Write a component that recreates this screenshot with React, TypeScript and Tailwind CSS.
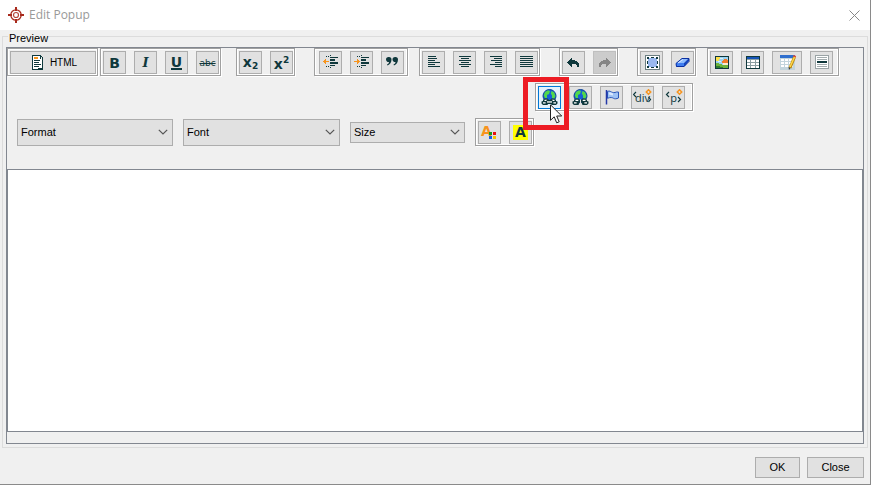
import { useState } from 'react';
import type { ReactNode } from 'react';
import clsx from 'clsx';

const INK = '#0f383c';

type ToolProps = {
  label: string;
  children: ReactNode;
  wide?: boolean;
  disabled?: boolean;
  active?: boolean;
};

function Tool({ label, children, wide, disabled, active }: ToolProps) {
  return (
    <button
      type="button"
      title={label}
      aria-label={label}
      disabled={disabled}
      className={clsx(
        'flex h-[23px] shrink-0 items-center justify-center border text-[#0f383c]',
        wide ? 'w-[30px]' : 'w-[23px]',
        active ? 'border-[#0078d7] bg-[#e5f1fb]' : disabled ? 'border-[#bfbfbf] bg-[#cccccc]' : 'border-[#adadad] bg-[#e1e1e1]'
      )}
    >
      {children}
    </button>
  );
}

function Group({ className, children }: { className?: string; children: ReactNode }) {
  return (
    <div
      className={clsx(
        'flex shrink-0 gap-2 border border-[#a0a0a0] pt-0.5 pb-px shadow-[inset_0_0_0_1px_#fff,1px_1px_0_#fff]',
        className ?? 'pl-0.5 pr-px'
      )}
    >
      {children}
    </div>
  );
}

function Icon({ children, smooth }: { children: ReactNode; smooth?: boolean }) {
  return (
    <svg width="17" height="17" viewBox="0 0 17 17" fill="none" shapeRendering={smooth ? 'auto' : 'crispEdges'} className="block shrink-0" aria-hidden="true">
      {children}
    </svg>
  );
}

const ALIGN = {
  left: 'M3 2h8v1H3zM3 4h9v1H3zM3 6h7v1H3zM3 8h12v1H3zM3 10h7v1H3zM3 12h12v1H3z',
  center: 'M3 2h12v1H3zM5 4h8v1H5zM3 6h12v1H3zM5 8h8v1H5zM3 10h12v1H3zM5 12h8v1H5z',
  right: 'M3 2h12v1H3zM7 4h8v1H7zM4 6h11v1H4zM8 8h7v1H8zM3 10h12v1H3zM8 12h7v1H8z',
  full: 'M2 2h13v1H2zM2 4h13v1H2zM2 6h13v1H2zM2 8h13v1H2zM2 10h13v1H2zM2 12h13v1H2z',
};

function AlignIcon({ kind }: { kind: keyof typeof ALIGN }) {
  return (
    <Icon>
      <path fill={INK} d={ALIGN[kind]} />
    </Icon>
  );
}

function IndentIcon({ out }: { out?: boolean }) {
  return (
    <Icon>
      <path fill={INK} d="M4 2h1v1H4zM6 2h1v1H6zM8 1h1v1H8zM8 3h8v1H8zM8 5h5v2H8zM8 8h8v2H8zM8 11h5v1H8zM4 12h1v1H4zM6 12h1v1H6zM8 13h1v1H8z" />
      {out ? (
        <path fill="#f7941d" d="M1 7h6v1H1zM2 6h2v3H2zM3 5h1v5H3z" />
      ) : (
        <path fill="#f7941d" d="M1 7h6v1H1zM4 6h2v3H4zM4 5h1v5H4z" />
      )}
    </Icon>
  );
}

function UndoIcon() {
  return (
    <Icon>
      <path fill={INK} d="M6 4h1v2h3v1h2v1h1v1h1v4h-2v-2h-1v-1H7v3H6v-1H5v-1H4v-1H3V9H2V8h1V7h1V6h1V5h1z" />
    </Icon>
  );
}

function RedoIcon() {
  return (
    <Icon>
      <path fill="#858585" d="M11 4h-1v2H7v1H5v1H4v1H3v4h2v-2h1v-1h4v3h1v-1h1v-1h1v-1h1V9h1V8h-1V7h-1V6h-1V5h-1z" />
    </Icon>
  );
}

function SelectAllIcon() {
  return (
    <Icon>
      <path fill="#fff" stroke="#6b7d80" d="M2.500 1.500h14v14h-14z" />
      <path fill="#9ab8ef" d="M5 4h9v9H5z" />
      <path fill={INK} d="M4 3h2v2H4zM8 3h3v1H8zM13 3h2v2h-2zM4 7h1v3H4zM14 7h1v3h-1zM4 12h2v2H4zM8 13h3v1H8zM13 12h2v2h-2z" />
    </Icon>
  );
}

function EraserIcon() {
  return (
    <Icon smooth>
      <path fill="#8dbcff" d="M2 9L8 4h7l-5 5z" />
      <path fill="#3f7df0" d="M2 9h8v4H2z" />
      <path fill="#1245c0" d="M10 9l5-5v3l-5 6z" />
      <path stroke="#0b2fa0" d="M2 9.500L8 4.500h7v3L10 12.500H2.500z" />
      <path stroke="#d7e6ff" d="M4 9L9 5.500" />
    </Icon>
  );
}

function ImageIcon() {
  return (
    <Icon>
      <path fill="#9bd3f2" stroke={INK} d="M2.500 2.500h13v12h-13z" />
      <path fill="#ffe14a" d="M3 3h4v2H6v2H3z" />
      <path fill="#d9f0fa" d="M7 4h3v1H7zM5 7h3v1H5z" />
      <path fill="#f07a28" d="M11 5h3v1h1v3H9V7h1V6h1z" />
      <path fill="#f7ead0" d="M10 9h5v2h-5z" />
      <path fill="#6db33a" d="M3 9h3v1h3v1h6v3H3z" />
      <path fill="#2d7d2e" d="M3 12h4v1h3v1H3z" />
    </Icon>
  );
}

function TableIcon() {
  return (
    <Icon>
      <path fill="#8b9ea2" d="M2 2h14v13H2z" />
      <path fill="#1554b8" d="M2 2h14v3H2z" />
      <path fill="#fff" d="M3 6h3v2H3zM7 6h4v2H7zM12 6h3v2h-3zM3 9h3v2H3zM7 9h4v2H7zM12 9h3v2h-3zM3 12h3v2H3zM7 12h4v2H7zM12 12h3v2h-3z" />
      <path stroke={INK} d="M2.500 2.500h13v12h-13z" />
    </Icon>
  );
}

function EditTableIcon() {
  return (
    <Icon smooth>
      <path fill="#c2d4dc" d="M1 1h15v15H1z" />
      <path fill="#2f6fce" d="M1 1h15v3H1z" />
      <path fill="#fff" d="M2 5h3v2H2zM6 5h3v2H6zM10 5h4v2h-4zM2 8h3v2H2zM6 8h3v2H6zM10 8h4v2h-4zM2 11h3v2H2zM6 11h3v2H6zM10 11h4v2h-4z" />
      <path stroke="#b98712" strokeWidth="3" d="M15.500 3L11 14" />
      <path stroke="#ffd84a" strokeWidth="1.500" d="M15.500 3L11 13" />
      <path stroke="#e24b36" strokeWidth="3" d="M16 1.500l-.6 1.500" />
      <path fill="#333" d="M9.500 13l2 1-1.500 2z" />
    </Icon>
  );
}

function RuleIcon() {
  return (
    <Icon>
      <path fill="#fff" stroke="#9aa3a5" d="M2.500 1.500h13v13h-13z" />
      <path fill="#a4adaf" d="M4 3h10v1H4zM4 5h10v1H4zM4 10h10v1H4zM4 12h10v1H4z" />
      <path fill={INK} d="M4 7h10v2H4z" />
    </Icon>
  );
}

function GlobeIcon({ broken }: { broken?: boolean }) {
  return (
    <Icon smooth>
      <circle cx="8.500" cy="7" r="6.500" fill="#1660d8" stroke="#0c4296" />
      <path fill="#52d84a" d="M4 3l3-1.800L9 2l-1 3-2 1v3H4L2.800 6.500zM10.500 2l2.500 1.200L14.500 7 13 10l-2-1V6.500L9.800 4.500z" />
      <path
        fill={INK}
        d="M3.500 9.500h3L8 11v1.500L6.500 16H2L.5 14.500v-2L2 12v-1zM13.500 9.500h-3L9 11v1.500l1.500 3.500H15l1.500-1.500v-2L15 12v-1z"
      />
      <path fill="#fff" d="M3.500 10.800h2.800v1.200H3.500zM10.700 10.800h2.800v1.200h-2.800zM2 13.300h2.600v1.300H2zM12.400 13.300H15v1.300h-2.600z" />
      {broken ? (
        <path fill="#e1e1e1" d="M8 10.500h1V17H8z" />
      ) : (
        <>
          <path fill={INK} d="M5.500 11h6v4h-6z" />
          <path fill="#fff" d="M6 12.300h5v1.300H6z" />
        </>
      )}
    </Icon>
  );
}

function FlagIcon() {
  return (
    <Icon smooth>
      <path fill="#9fc3f5" stroke="#2a56b8" d="M4.500 2.500c2-1 3 0 4 .5s3 1 5 0h2v6c-2 1-4 1-5 .3s-3-1.300-6 0z" />
      <path fill="#dbe9ff" d="M6 3.500h2l2 1v2L6 5.500z" />
      <path stroke="#2438a8" strokeWidth="1.500" d="M3.500 1v14.500" />
    </Icon>
  );
}

function TagIcon({ name }: { name: string }) {
  return (
    <span className="relative flex h-[17px] w-[17px] items-center justify-center font-['Open_Sans',sans-serif] text-[11px] leading-3">
      <span>{name}</span>
      <svg width="19" height="17" viewBox="0 0 19 17" fill="none" className="absolute -left-px top-0" aria-hidden="true">
        <path stroke={INK} strokeWidth="1.200" d={name === 'p' ? 'M5 3L2.500 5.500 5 8M14 8l2.500 2.500L14 13' : 'M3 3L.5 5.500 3 8M15.500 8l2 2.500-2 2.500'} />
        <path stroke="#f7941d" strokeWidth="1.500" d="M15.500.800l2.200 2.200-2.200 2.200L13.300 3z" />
      </svg>
    </span>
  );
}

function QuoteIcon() {
  return (
    <Icon smooth>
      <path fill={INK} d="M5 3a2.500 2.500 0 0 1 2.500 2.500C7.500 8.500 6 10.500 3.500 11.500L3 10.500c1.300-.8 2-1.600 2-2.600A2.500 2.500 0 1 1 5 3zM11.500 3A2.500 2.500 0 0 1 14 5.500c0 3-1.500 5-4 6l-.5-1c1.300-.8 2-1.600 2-2.600a2.500 2.500 0 1 1 0-4.900z" />
    </Icon>
  );
}

function Dropdown({ name, className }: { name: string; className: string }) {
  return (
    <div className={clsx('relative', className)}>
      <select aria-label={name} className="h-full w-full appearance-none border border-[#adadad] bg-[#e1e1e1] pl-[3px] pr-5">
        <option>{name}</option>
      </select>
      <svg width="10" height="6" viewBox="0 0 10 6" fill="none" className="pointer-events-none absolute inset-y-0 right-[5px] my-auto" aria-hidden="true">
        <path stroke="#555" strokeWidth="1.200" d="M.8.800L5 5 9.200.800" />
      </svg>
    </div>
  );
}

function DialogButton({ children, className }: { children: ReactNode; className: string }) {
  return (
    <button type="button" className={clsx('h-[21px] border border-[#adadad] bg-[#e1e1e1]', className)}>
      {children}
    </button>
  );
}

export default function App() {
  const [content, setContent] = useState('');

  return (
    <div className="flex min-h-screen flex-col border-r border-b border-[#8a8a8a] bg-[#f0f0f0] font-['Liberation_Sans',Arial,sans-serif] text-[11px] text-black">
      <header className="flex h-[30px] items-center gap-[5px] bg-white pl-2 pr-2.5">
        <svg width="16" height="16" viewBox="0 0 16 16" fill="none" aria-hidden="true">
          <circle cx="8" cy="8" r="5.200" stroke="#a82a1c" strokeWidth="1.300" />
          <circle cx="8" cy="8" r="2.500" stroke="#b5483c" strokeWidth="1.200" />
          <path stroke="#a82a1c" strokeWidth="2" d="M8 0v4M8 12v4M0 8h4M12 8h4" />
        </svg>
        <h1 className="font-['Open_Sans',sans-serif] text-[12px] text-[#999]">Edit Popup</h1>
        <button type="button" aria-label="Close window" className="ml-auto">
          <svg width="11" height="11" viewBox="0 0 11 11" fill="none" className="block" aria-hidden="true">
            <path stroke="#888" d="M.5.500l10 10M10.500.500l-10 10" />
          </svg>
        </button>
      </header>

      <section aria-labelledby="preview-title" className="mx-0.5 mt-1.5 flex flex-1 flex-col border border-[#dcdcdc] px-[3px] pb-[3px]">
        <h2 id="preview-title" className="-mt-[5px] mb-[3px] ml-0.5 w-fit bg-[#f0f0f0] px-px leading-3">Preview</h2>

        <div className="flex flex-1 flex-col border border-[#828790]">
          <div className="flex flex-col gap-[7px] pb-[23px]">
            <div className="flex items-start">
              <Group>
                <button type="button" className="flex h-[23px] w-[86px] items-center justify-center gap-1 border border-[#adadad] bg-[#e1e1e1] text-[10px]">
                  <Icon>
                    <path fill="#fff" d="M3 2h9v2h2v12H3z" />
                    <path stroke={INK} d="M3.500 1.500h8l2 2v12h-10z" />
                    <path fill={INK} d="M5 6h6v1H5zM5 8h5v1H5zM5 10h7v1H5zM5 12h5v1H5zM11 2h1v3h-1zM13 5h1v11h-1zM9 14h4v1H9z" />
                    <path fill="#f7941d" d="M5 3h4v2H5z" />
                  </Icon>
                  HTML
                </button>
              </Group>
              <div className="ml-0.5">
                <Group>
                  <Tool label="Bold">
                    <span className="font-['DejaVu_Sans',sans-serif] text-[14px] font-bold leading-4">B</span>
                  </Tool>
                  <Tool label="Italic">
                    <span className="font-['DejaVu_Serif',serif] text-[13px] font-bold italic leading-4">I</span>
                  </Tool>
                  <Tool label="Underline">
                    <span className="border-b-2 border-[#0f383c] font-['DejaVu_Sans',sans-serif] text-[14px] font-bold leading-3">U</span>
                  </Tool>
                  <Tool label="Strikethrough">
                    <span className="font-['DejaVu_Sans',sans-serif] text-[9px] leading-3 line-through">abc</span>
                  </Tool>
                </Group>
              </div>
              <div className="ml-[15px]">
                <Group>
                  <Tool label="Subscript">
                    <span className="flex items-end font-['DejaVu_Sans',sans-serif] font-bold">
                      <span className="pb-0.5 text-[14px] leading-3">x</span>
                      <span className="text-[9px] leading-[8px]">2</span>
                    </span>
                  </Tool>
                  <Tool label="Superscript">
                    <span className="flex items-start font-['DejaVu_Sans',sans-serif] font-bold">
                      <span className="pt-0.5 text-[14px] leading-3">x</span>
                      <span className="text-[9px] leading-[8px]">2</span>
                    </span>
                  </Tool>
                </Group>
              </div>
              <div className="ml-[19px]">
                <Group className="pl-1 pr-[3px]">
                  <Tool label="Decrease indent"><IndentIcon out /></Tool>
                  <Tool label="Increase indent"><IndentIcon /></Tool>
                  <Tool label="Block quote"><QuoteIcon /></Tool>
                </Group>
              </div>
              <div className="ml-[11px]">
                <Group>
                  <Tool label="Align left"><AlignIcon kind="left" /></Tool>
                  <Tool label="Align center"><AlignIcon kind="center" /></Tool>
                  <Tool label="Align right"><AlignIcon kind="right" /></Tool>
                  <Tool label="Justify"><AlignIcon kind="full" /></Tool>
                </Group>
              </div>
              <div className="ml-[19px]">
                <Group>
                  <Tool label="Undo"><UndoIcon /></Tool>
                  <Tool label="Redo" disabled><RedoIcon /></Tool>
                </Group>
              </div>
              <div className="ml-[19px]">
                <Group>
                  <Tool label="Select all"><SelectAllIcon /></Tool>
                  <Tool label="Clear formatting"><EraserIcon /></Tool>
                </Group>
              </div>
              <div className="ml-[11px]">
                <Group className="pl-0.5 pr-[5px]">
                  <Tool label="Insert image"><ImageIcon /></Tool>
                  <Tool label="Insert table"><TableIcon /></Tool>
                  <Tool label="Edit table" wide><EditTableIcon /></Tool>
                  <Tool label="Horizontal rule"><RuleIcon /></Tool>
                </Group>
              </div>
            </div>

            <div className="flex pl-[528px]">
              <Group className="pl-0.5 pr-[7px]">
                <div className="relative">
                  <Tool label="Insert link" active><GlobeIcon /></Tool>
                  {/* highlighted step with the pointer on top */}
                  <div className="pointer-events-none absolute -left-[15px] -top-[9px] z-10 h-[53px] w-[46px] border-[5px] border-[#ed1c24]" />
                  <svg width="13" height="20" viewBox="0 0 13 20" className="pointer-events-none absolute left-3 top-[18px] z-20" aria-hidden="true">
                    <path fill="#fff" stroke="#222" d="M.5.800v15.500l3.700-3.500 2.500 6 2.500-1-2.500-5.800h5z" />
                  </svg>
                </div>
                <Tool label="Remove link"><GlobeIcon broken /></Tool>
                <Tool label="Anchor"><FlagIcon /></Tool>
                <Tool label="Insert div"><TagIcon name="div" /></Tool>
                <Tool label="Insert paragraph"><TagIcon name="p" /></Tool>
              </Group>
            </div>

            <div className="flex items-center gap-2.5 pl-2.5">
              <Dropdown name="Format" className="h-[27px] w-[156px]" />
              <Dropdown name="Font" className="h-[27px] w-[157px]" />
              <Dropdown name="Size" className="h-[21px] w-[115px]" />
              <Group>
                <Tool label="Text color">
                  <span className="relative flex h-[17px] w-[17px]">
                    <span className="font-['DejaVu_Sans',sans-serif] text-[14px] font-bold leading-[14px] text-[#f7941d]">A</span>
                    <svg width="7" height="7" viewBox="0 0 7 7" className="absolute right-0.5 bottom-0.5" aria-hidden="true">
                      <path fill="#1a9a1a" d="M0 0h3v3H0z" />
                      <path fill="#e81010" d="M4 0h3v3H4z" />
                      <path fill="#1060e8" d="M0 4h3v3H0z" />
                      <path fill="#f5c400" d="M4 4h3v3H4z" />
                    </svg>
                  </span>
                </Tool>
                <Tool label="Highlight color">
                  <span className="h-[15px] w-[15px] bg-[#ffff00] text-center font-['DejaVu_Sans',sans-serif] text-[14px] font-bold leading-[15px]">A</span>
                </Tool>
              </Group>
            </div>
          </div>

          <textarea
            aria-label="Popup content"
            value={content}
            onChange={e => setContent(e.target.value)}
            className="mb-[11px] block w-full flex-1 resize-none border border-[#828790] bg-white p-1 outline-none"
          />
        </div>
      </section>

      <footer className="flex justify-end gap-[7px] pt-[9px] pr-1.5 pb-1.5">
        <DialogButton className="w-[45px]">OK</DialogButton>
        <DialogButton className="w-[57px]">Close</DialogButton>
      </footer>
    </div>
  );
}
